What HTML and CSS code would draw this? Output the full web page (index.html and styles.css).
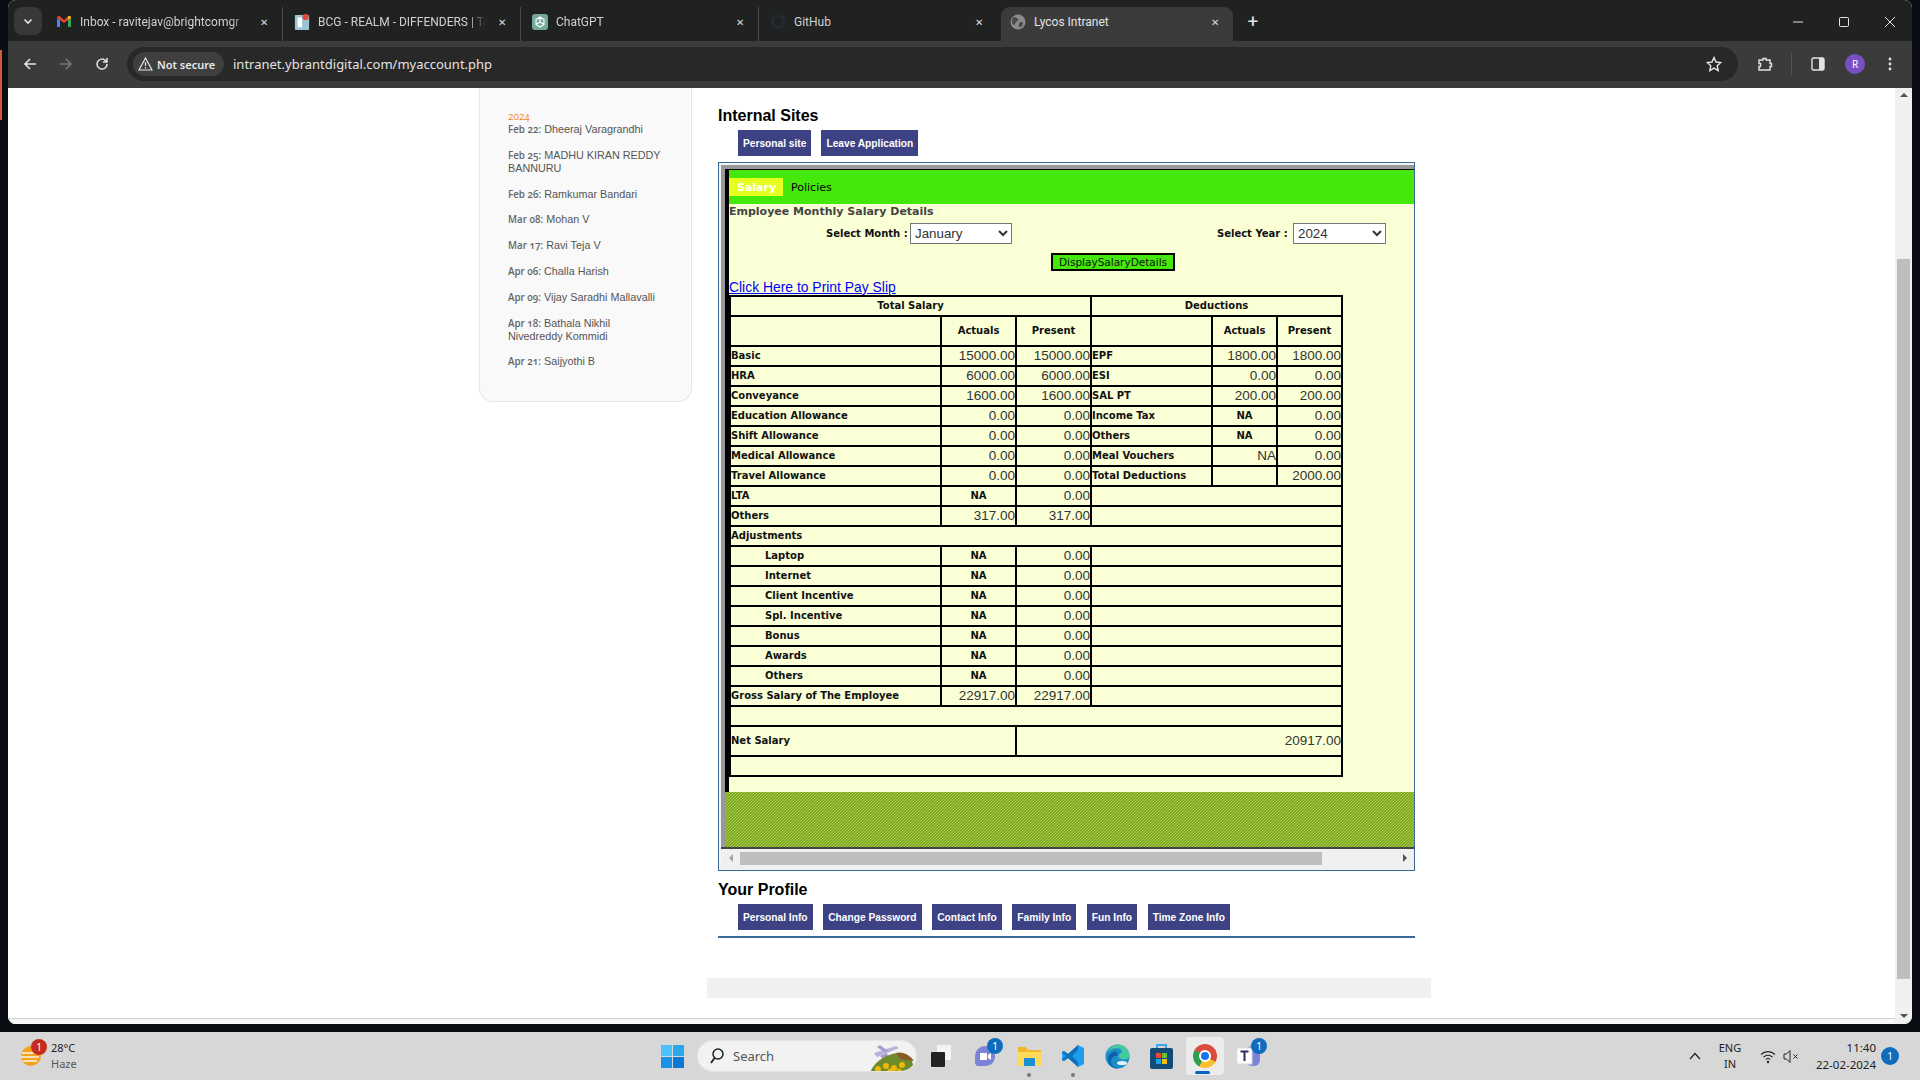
FILE: index.html
```html
<!DOCTYPE html>
<html lang="en">
<head>
    <meta charset="UTF-8">
    <title>Lycos Intranet</title>
    <link rel="stylesheet" href="styles.css">
</head>
<body>
    <div class="edge-strip"></div>

    <div class="window">
        <!-- Browser tabs -->
        <div class="tabstrip">
            <div class="tab-menu">
                <svg width="12" height="12" viewBox="0 0 12 12"><path d="M2.5 4.5 6 8l3.5-3.5" fill="none" stroke="#e3e3e3" stroke-width="1.6"/></svg>
            </div>
            <div class="tab">
                <svg class="favicon" viewBox="0 0 16 16"><path d="M1 13V4l3 2v7z" fill="#4285f4"/><path d="M15 13V4l-3 2v7z" fill="#34a853"/><path d="M1 4c0-2 2-2.500 3-1.500L8 6l4-3.500c1-1 3-.5 3 1.500l-3 2-4 3-4-3z" fill="#ea4335"/><path d="M12 2.500c1-1 3-.5 3 1.500l-3 2z" fill="#fbbc04"/></svg>
                <span class="tab-title">Inbox - ravitejav@brightcomgr</span>
                <span class="tab-close">&#10005;</span>
            </div>
            <div class="tab">
                <svg class="favicon" viewBox="0 0 16 18"><rect y="1" width="16" height="17" rx="1" fill="#9cc6d6"/><rect x="3" y="4" width="5" height="11" fill="#fff"/><circle cx="12" cy="3.500" r="3.500" fill="#e2453c"/></svg>
                <span class="tab-title">BCG - REALM - DIFFENDERS | Tr</span>
                <span class="tab-close">&#10005;</span>
            </div>
            <div class="tab">
                <svg class="favicon" viewBox="0 0 16 16"><rect width="16" height="16" rx="3" fill="#74aa9c"/><path d="M8 3 12 5.500v5L8 13 4 10.500v-5zM8 3v5l4 2.500M8 8l-4 2.500" fill="none" stroke="#fff" stroke-width="1.100"/></svg>
                <span class="tab-title">ChatGPT</span>
                <span class="tab-close">&#10005;</span>
            </div>
            <div class="tab tab-before-active">
                <svg class="favicon" viewBox="0 0 16 16"><circle cx="8" cy="8" r="7.500" fill="#24292e"/><circle cx="8" cy="7" r="4" fill="#1f2120"/></svg>
                <span class="tab-title">GitHub</span>
                <span class="tab-close">&#10005;</span>
            </div>
            <div class="tab tab-active">
                <svg class="favicon" viewBox="0 0 16 16"><circle cx="8" cy="8" r="7.500" fill="#8b8b8b"/><path d="M4 3c2 0 3 1 4 2s-1 2-2 3-1 3-2 3-2-2-2-4 1-4 2-4zM11 8c1 0 2 0 2 1s-1 4-3 4-1-2-1-3 1-2 2-2z" fill="#4a4a4a"/></svg>
                <span class="tab-title">Lycos Intranet</span>
                <span class="tab-close">&#10005;</span>
            </div>
            <div class="tab-new">+</div>
            <div class="win-controls">
                <svg width="12" height="12" viewBox="0 0 12 12"><path d="M1 6h10" stroke="#e3e3e3"/></svg>
                <svg width="12" height="12" viewBox="0 0 12 12"><rect x="1.500" y="1.500" width="9" height="9" rx="1" fill="none" stroke="#e3e3e3"/></svg>
                <svg width="12" height="12" viewBox="0 0 12 12"><path d="m1 1 10 10M11 1 1 11" stroke="#e3e3e3"/></svg>
            </div>
        </div>

        <!-- Address bar -->
        <div class="toolbar">
            <svg class="tool-icon" viewBox="0 0 16 16"><path d="M14 8H3M8 3 3 8l5 5" fill="none" stroke="#e3e3e3" stroke-width="1.600"/></svg>
            <svg class="tool-icon" viewBox="0 0 16 16"><path d="M2 8h11M8 3l5 5-5 5" fill="none" stroke="#777" stroke-width="1.600"/></svg>
            <svg class="tool-icon" viewBox="0 0 16 16"><path d="M13 8a5 5 0 1 1-1.500-3.500L13 6M13 2v4H9" fill="none" stroke="#e3e3e3" stroke-width="1.500"/></svg>
            <div class="omnibox">
                <div class="not-secure">
                    <svg width="15" height="14" viewBox="0 0 15 14"><path d="M7.500 1 14 13H1zM7.500 5v4M7.500 10v1.500" fill="none" stroke="#e3e3e3" stroke-width="1.200"/></svg>
                    <span>Not secure</span>
                </div>
                <span class="url">intranet.ybrantdigital.com/myaccount.php</span>
                <svg class="star" width="16" height="16" viewBox="0 0 16 16"><path d="m8 1.500 2 4.500 4.800.5-3.600 3.200 1 4.800L8 12.100 3.800 14.500l1-4.800L1.200 6.500 6 6z" fill="none" stroke="#e3e3e3" stroke-width="1.400"/></svg>
            </div>
            <svg class="tool-icon ext-icon" viewBox="0 0 16 16"><path d="M2 4h4V2.500h3V4h4v3.500h1.500v3H13V14H2v-3.500h1.500v-3H2z" fill="none" stroke="#e3e3e3" stroke-width="1.400"/></svg>
            <div class="tool-sep"></div>
            <svg class="tool-icon panel-icon" viewBox="0 0 16 16"><rect x="2" y="2" width="12" height="12" rx="1.500" fill="none" stroke="#e3e3e3" stroke-width="1.400"/><rect x="9" y="2" width="5" height="12" fill="#e3e3e3"/></svg>
            <div class="avatar">R</div>
            <svg class="tool-icon dots-icon" viewBox="0 0 16 16"><circle cx="8" cy="3" r="1.400" fill="#e3e3e3"/><circle cx="8" cy="8" r="1.400" fill="#e3e3e3"/><circle cx="8" cy="13" r="1.400" fill="#e3e3e3"/></svg>
        </div>

        <div class="viewport">
            <div class="page">
                <div class="page-row">
                    <!-- Birthday list -->
                    <aside class="sidebar">
                        <div class="year">2024</div>
                        <p class="bday"><span class="bday-date">Feb 22:</span> Dheeraj Varagrandhi</p>
                        <p class="bday"><span class="bday-date">Feb 25:</span> MADHU KIRAN REDDY BANNURU</p>
                        <p class="bday"><span class="bday-date">Feb 26:</span> Ramkumar Bandari</p>
                        <p class="bday"><span class="bday-date">Mar 08:</span> Mohan V</p>
                        <p class="bday"><span class="bday-date">Mar 17:</span> Ravi Teja V</p>
                        <p class="bday"><span class="bday-date">Apr 06:</span> Challa Harish</p>
                        <p class="bday"><span class="bday-date">Apr 09:</span> Vijay Saradhi Mallavalli</p>
                        <p class="bday"><span class="bday-date">Apr 18:</span> Bathala Nikhil Nivedreddy Kommidi</p>
                        <p class="bday"><span class="bday-date">Apr 21:</span> Saijyothi B</p>
                    </aside>

                    <main class="main">
                        <h2 class="section-title first">Internal Sites</h2>
                        <div class="btn-row">
                            <a class="blue-btn" href="#">Personal site</a>
                            <a class="blue-btn" href="#">Leave Application</a>
                        </div>

                        <!-- Salary frame -->
                        <div class="frame">
                            <div class="frame-pane">
                                <div class="salary-body">
                                    <div class="green-tabs">
                                        <span class="green-tab current">Salary</span>
                                        <span class="green-tab">Policies</span>
                                    </div>
                                    <div class="salary-title">Employee Monthly Salary Details</div>
                                    <div class="select-row">
                                        <label class="select-label">Select Month :</label>
                                        <select class="month-select"><option>January</option></select>
                                        <label class="select-label year-label">Select Year :</label>
                                        <select class="year-select"><option>2024</option></select>
                                    </div>
                                    <button class="display-btn" type="button">DisplaySalaryDetails</button>
                                    <a class="print-link" href="#">Click Here to Print Pay Slip</a>

                                    <table class="salary-table">
                                        <colgroup>
                                            <col class="c-label"><col class="c-num"><col class="c-num">
                                            <col class="c-ded"><col class="c-act"><col class="c-pre">
                                        </colgroup>
                                        <tr><th colspan="3">Total Salary</th><th colspan="3">Deductions</th></tr>
                                        <tr class="tall"><th></th><th>Actuals</th><th>Present</th><th></th><th>Actuals</th><th>Present</th></tr>
                                        <tr><td class="lb">Basic</td><td>15000.00</td><td>15000.00</td><td class="lb">EPF</td><td>1800.00</td><td>1800.00</td></tr>
                                        <tr><td class="lb">HRA</td><td>6000.00</td><td>6000.00</td><td class="lb">ESI</td><td>0.00</td><td>0.00</td></tr>
                                        <tr><td class="lb">Conveyance</td><td>1600.00</td><td>1600.00</td><td class="lb">SAL PT</td><td>200.00</td><td>200.00</td></tr>
                                        <tr><td class="lb">Education Allowance</td><td>0.00</td><td>0.00</td><td class="lb">Income Tax</td><td class="na">NA</td><td>0.00</td></tr>
                                        <tr><td class="lb">Shift Allowance</td><td>0.00</td><td>0.00</td><td class="lb">Others</td><td class="na">NA</td><td>0.00</td></tr>
                                        <tr><td class="lb">Medical Allowance</td><td>0.00</td><td>0.00</td><td class="lb">Meal Vouchers</td><td>NA</td><td>0.00</td></tr>
                                        <tr><td class="lb">Travel Allowance</td><td>0.00</td><td>0.00</td><td class="lb">Total Deductions</td><td></td><td>2000.00</td></tr>
                                        <tr><td class="lb">LTA</td><td class="na">NA</td><td>0.00</td><td colspan="3"></td></tr>
                                        <tr><td class="lb">Others</td><td>317.00</td><td>317.00</td><td colspan="3"></td></tr>
                                        <tr><td class="lb" colspan="6">Adjustments</td></tr>
                                        <tr><td class="lb sub">Laptop</td><td class="na">NA</td><td>0.00</td><td colspan="3"></td></tr>
                                        <tr><td class="lb sub">Internet</td><td class="na">NA</td><td>0.00</td><td colspan="3"></td></tr>
                                        <tr><td class="lb sub">Client Incentive</td><td class="na">NA</td><td>0.00</td><td colspan="3"></td></tr>
                                        <tr><td class="lb sub">Spl. Incentive</td><td class="na">NA</td><td>0.00</td><td colspan="3"></td></tr>
                                        <tr><td class="lb sub">Bonus</td><td class="na">NA</td><td>0.00</td><td colspan="3"></td></tr>
                                        <tr><td class="lb sub">Awards</td><td class="na">NA</td><td>0.00</td><td colspan="3"></td></tr>
                                        <tr><td class="lb sub">Others</td><td class="na">NA</td><td>0.00</td><td colspan="3"></td></tr>
                                        <tr><td class="lb">Gross Salary of The Employee</td><td>22917.00</td><td>22917.00</td><td colspan="3"></td></tr>
                                        <tr><td colspan="6"></td></tr>
                                        <tr class="tall"><td class="lb" colspan="2">Net Salary</td><td colspan="4">20917.00</td></tr>
                                        <tr><td colspan="6"></td></tr>
                                    </table>
                                </div>
                                <svg class="hatch" width="100%" height="55">
                                    <defs>
                                        <pattern id="hatch-tile" width="3" height="3" patternUnits="userSpaceOnUse">
                                            <rect width="3" height="3" fill="#7fa81a"/>
                                            <rect x="2" y="0" width="1" height="1" fill="#a9cc5c"/>
                                            <rect x="1" y="1" width="1" height="1" fill="#a9cc5c"/>
                                            <rect x="0" y="2" width="1" height="1" fill="#a9cc5c"/>
                                        </pattern>
                                    </defs>
                                    <rect width="100%" height="55" fill="url(#hatch-tile)"/>
                                </svg>
                            </div>
                            <div class="frame-hscroll">
                                <span class="arrow-left"></span>
                                <div class="hscroll-thumb"></div>
                                <span class="arrow-right"></span>
                            </div>
                        </div>

                        <h2 class="section-title">Your Profile</h2>
                        <div class="btn-row profile-btns">
                            <a class="blue-btn" href="#">Personal Info</a>
                            <a class="blue-btn" href="#">Change Password</a>
                            <a class="blue-btn" href="#">Contact Info</a>
                            <a class="blue-btn" href="#">Family Info</a>
                            <a class="blue-btn" href="#">Fun Info</a>
                            <a class="blue-btn" href="#">Time Zone Info</a>
                        </div>
                        <div class="profile-line"></div>
                    </main>
                </div>
                <div class="page-footer"></div>
                <div class="page-edge"></div>
            </div>

            <div class="page-scroll">
                <span class="arrow-up"></span>
                <div class="page-thumb"></div>
                <span class="arrow-down"></span>
            </div>
        </div>
    </div>

    <!-- Windows taskbar -->
    <div class="taskbar">
        <div class="weather">
            <svg class="weather-icon" width="22" height="22" viewBox="0 0 22 22"><circle cx="11" cy="11" r="10" fill="#f6a11b"/><path d="M2 8h16M1 12h18M3 16h14" stroke="#f4e2b8" stroke-width="2"/></svg>
            <span class="red-badge">1</span>
            <div class="weather-text"><span>28°C</span><span class="haze">Haze</span></div>
        </div>

        <div class="start-icon">
            <svg width="23" height="23" viewBox="0 0 23 23"><rect width="11" height="11" fill="#4cc2ff"/><rect x="12" width="11" height="11" fill="#2ba7ee"/><rect y="12" width="11" height="11" fill="#1a92e4"/><rect x="12" y="12" width="11" height="11" fill="#0a78d4"/></svg>
        </div>
        <div class="search-box">
            <svg width="16" height="18" viewBox="0 0 16 18"><circle cx="9" cy="7" r="5" fill="none" stroke="#222" stroke-width="1.500"/><path d="M5.500 11 2 16" stroke="#222" stroke-width="1.800"/></svg>
            <span class="search-text">Search</span>
            <svg class="search-art" width="50" height="32" viewBox="0 0 50 32"><path d="M8 12 30 5l3 2-22 9z" fill="#b9b3dc"/><path d="M14 4l8 6-4 1-7-5zM14 15l7-3 1 3-5 3z" fill="#a49dcf"/><path d="M4 32c4-12 18-20 30-20s12 10 14 14l-2 6z" fill="#6d8a2c"/><path d="M30 12c6-2 14 2 18 8l-14-2z" fill="#8a5a24"/><circle cx="12" cy="28" r="3" fill="#f2b705"/><circle cx="20" cy="25" r="3" fill="#f2b705"/><circle cx="28" cy="27" r="3" fill="#f2b705"/><circle cx="36" cy="24" r="3" fill="#f2b705"/><circle cx="24" cy="30" r="2.500" fill="#f2b705"/><circle cx="33" cy="30" r="2.500" fill="#f2b705"/></svg>
        </div>
        <div class="task-slot">
            <svg width="20" height="22" viewBox="0 0 20 22"><rect x="6" y="0" width="14" height="15" rx="1" fill="#f4f4f4"/><rect y="7" width="14" height="15" rx="1" fill="#222"/></svg>
        </div>
        <div class="task-slot">
            <svg width="24" height="24" viewBox="0 0 24 24"><path d="M12 2a10 10 0 0 1 10 10c0 6-4 10-10 10H5c-2 0-3-2-3-4v-6A10 10 0 0 1 12 2z" fill="#7b83d8"/><path d="M7 9h7v7H7zM15 11l3-2v7l-3-2z" fill="#fff"/></svg>
            <span class="blue-badge">1</span>
        </div>
        <div class="task-slot">
            <svg width="25" height="22" viewBox="0 0 25 22"><path d="M1 2h8l2 3h13v16H1z" fill="#f0b72f"/><path d="M1 7h23v14H1z" fill="#ffd95a"/><rect x="7" y="13" width="11" height="8" fill="#1a8fd8"/></svg>
            <span class="app-dot"></span>
        </div>
        <div class="task-slot">
            <svg width="24" height="24" viewBox="0 0 24 24"><path d="M17 1l6 3v16l-6 3-10-9-4 3-2-1V8l2-1 4 3z" fill="#1f9cf0"/><path d="M17 1 7 10l-4-3-2 1 4 4-4 4 2 1 4-3 10 9 0-5-6-6 6-6z" fill="#0f6fb8"/></svg>
            <span class="app-dot"></span>
        </div>
        <div class="task-slot">
            <svg width="25" height="25" viewBox="0 0 25 25"><circle cx="12.500" cy="12.500" r="12" fill="#1b8ec9"/><path d="M2 9C4 3 9 .5 13 .5c6 0 11 5 11.500 11 0 3-3 4-6 4-3 0-5-1-5-3 0-3 4-3 3-6C15 3 6 3 2 9z" fill="#46c8a0"/><path d="M13 12c-4-1-7 2-7 6s4 6.500 8 6.500c-5 1-11-3-11-10 0-2 3-7 8-7z" fill="#0c5ea6"/><ellipse cx="17" cy="19" rx="5" ry="2" fill="#e6f3f8"/></svg>
        </div>
        <div class="task-slot">
            <svg width="23" height="26" viewBox="0 0 23 26"><path d="M7 5V2h9v3" fill="none" stroke="#3fa5e8" stroke-width="2"/><rect y="5" width="23" height="21" rx="2" fill="#124a78"/><rect x="6" y="10" width="5" height="5" fill="#e8492e"/><rect x="12" y="10" width="5" height="5" fill="#6dbb2e"/><rect x="6" y="16" width="5" height="5" fill="#1ea3ea"/><rect x="12" y="16" width="5" height="5" fill="#fbbc09"/></svg>
        </div>
        <div class="task-slot active-slot">
            <div class="chrome-logo"><div class="chrome-eye"></div></div>
            <span class="active-bar"></span>
        </div>
        <div class="task-slot">
            <svg width="26" height="26" viewBox="0 0 26 26"><rect x="10" y="3" width="14" height="20" rx="6" fill="#7b83d8"/><rect x="1" y="5" width="15" height="16" fill="#fff" stroke="#ddd"/><path d="M4.500 8.500h8M8.500 8.500V18" stroke="#2b2b6b" stroke-width="2"/></svg>
            <span class="blue-badge">1</span>
        </div>

        <div class="tray">
            <svg class="tray-up" width="12" height="8" viewBox="0 0 12 8"><path d="m1 7 5-5.500L11 7" fill="none" stroke="#222" stroke-width="1.200"/></svg>
            <div class="lang"><span>ENG</span><span>IN</span></div>
            <svg width="16" height="15" viewBox="0 0 16 15"><path d="M1 5.500a10 10 0 0 1 14 0M3.500 8a6.500 6.500 0 0 1 9 0M5.800 10.500a3 3 0 0 1 4.400 0" fill="none" stroke="#222" stroke-width="1.100"/><circle cx="8" cy="13" r="1.200" fill="#222"/></svg>
            <svg class="speaker" width="17" height="15" viewBox="0 0 17 15"><path d="M1 5h2.500L7 1.500v12L3.500 10H1zM10.500 5.500l4 4M14.500 5.500l-4 4" fill="none" stroke="#222" stroke-width="1"/></svg>
            <div class="clock"><span>11:40</span><span>22-02-2024</span></div>
            <span class="notif-badge">1</span>
        </div>
    </div>
</body>
</html>
```

FILE: styles.css
```css
* {
    box-sizing: border-box;
}

body {
    margin: 0;
    width: 1920px;
    height: 1080px;
    overflow: hidden;
    background-color: #0a0d12;
    font-family: "Liberation Sans", Arial, sans-serif;
}

.edge-strip {
    position: absolute;
    left: 0;
    top: 50px;
    width: 2px;
    height: 70px;
    background-color: #d2593a;
}

.window {
    margin: 0 8px;
    height: 1024px;
    border-radius: 8px;
    overflow: hidden;
    display: flex;
    flex-direction: column;
    background-color: #fff;
}

/* Tabs */
.tabstrip {
    height: 41px;
    flex: none;
    display: flex;
    align-items: flex-end;
    background-color: #202221;
    font-family: Roboto, sans-serif;
    font-size: 12px;
    color: #d0d0d0;
}

.tab-menu {
    width: 28px;
    height: 28px;
    margin: 0 3px 6px 6px;
    border-radius: 8px;
    background-color: #383838;
    display: flex;
    align-items: center;
    justify-content: center;
}

.tab {
    position: relative;
    width: 238px;
    height: 34px;
    flex: none;
    display: flex;
    align-items: center;
    padding: 0 12px 4px 11px;
    border-right: 1px solid #4b4b4b;
    background-clip: padding-box;
}

.tab-before-active {
    border-right: 0;
}

.tab-active {
    background-color: #3b3b3b;
    border-right: 0;
    border-radius: 9px 9px 0 0;
    width: 232px;
    margin-left: 4px;
    padding-left: 9px;
    color: #e3e3e3;
}

.favicon {
    width: 16px;
    height: 16px;
    flex: none;
    margin-right: 8px;
}

.tab-title {
    flex: 1;
    white-space: nowrap;
    overflow: hidden;
    -webkit-mask-image: linear-gradient(to right, #000 90%, transparent);
    mask-image: linear-gradient(to right, #000 90%, transparent);
}

.tab-active .tab-title,
.tab-before-active .tab-title {
    -webkit-mask-image: none;
    mask-image: none;
}

.tab-close {
    flex: none;
    width: 12px;
    margin-left: 10px;
    font-size: 10px;
    text-align: center;
    color: #dcdcdc;
}

.tab-new {
    width: 40px;
    height: 34px;
    text-align: center;
    font-size: 19px;
    line-height: 30px;
    color: #e3e3e3;
}

.win-controls {
    margin-left: auto;
    display: flex;
    gap: 34px;
    padding: 0 16px 13px 0;
}

/* Toolbar */
.toolbar {
    height: 47px;
    flex: none;
    display: flex;
    align-items: center;
    padding: 0 0 1px 14px;
    background-color: #3b3b3b;
}

.tool-icon {
    width: 16px;
    height: 16px;
    flex: none;
    margin-right: 20px;
}

.omnibox {
    width: 1611px;
    height: 34px;
    margin-left: -3px;
    flex: none;
    border-radius: 17px;
    background-color: #282828;
    display: flex;
    align-items: center;
    padding: 0 16px 0 6px;
}

.not-secure {
    height: 24px;
    width: 91px;
    border-radius: 12px;
    background-color: #3f3f3f;
    display: flex;
    align-items: center;
    gap: 4px;
    padding-left: 5px;
    font-family: "Noto Sans", sans-serif;
    font-size: 11px;
    font-weight: 600;
    color: #e8e8e8;
}

.url {
    margin-left: 9px;
    font-family: "Noto Sans", sans-serif;
    font-size: 13px;
    color: #e3e3e3;
}

.star {
    margin-left: auto;
}

.ext-icon {
    margin: 0 0 0 19px;
}

.tool-sep {
    width: 1px;
    height: 22px;
    margin: 0 18px;
    background-color: #555;
}

.panel-icon {
    margin-right: 19px;
}

.avatar {
    width: 20px;
    height: 20px;
    border-radius: 50%;
    background-color: #7b4fc4;
    color: #fff;
    font-family: "Noto Sans", sans-serif;
    font-size: 10px;
    text-align: center;
    line-height: 20px;
}

.dots-icon {
    margin: 0 0 0 17px;
}

/* Page */
.viewport {
    flex: 1;
    display: flex;
    min-height: 0;
}

.page {
    flex: 1;
    min-width: 0;
    display: flex;
    flex-direction: column;
    background-color: #fff;
}

.page-row {
    display: flex;
    align-items: flex-start;
}

.sidebar {
    width: 213px;
    height: 314px;
    margin-left: 471px;
    padding: 22px 0 0 28px;
    background-color: #f9f9f9;
    border: 1px solid #e6e6e6;
    border-top: 0;
    border-radius: 0 0 14px 14px;
    font-size: 10.8px;
    line-height: 13px;
    color: #555;
}

.year {
    height: 13px;
    font-family: "Open Sans", sans-serif;
    font-feature-settings: "onum";
    font-size: 10px;
    color: #f5872b;
}

.bday {
    width: 156px;
    margin: 0 0 12.8px;
}

.bday-date {
    font-family: "Open Sans", sans-serif;
    font-feature-settings: "onum";
    font-size: 9.8px;
    font-weight: 600;
    color: #666;
}

.main {
    width: 697px;
    margin-left: 26px;
}

.section-title {
    margin: 10px 0 5px;
    font-size: 16px;
    line-height: 18px;
    color: #000;
}

.section-title.first {
    margin-top: 19px;
}

.btn-row {
    display: flex;
    gap: 10px;
    padding-left: 20px;
}

.profile-btns {
    gap: 10.7px;
}

.blue-btn {
    height: 26px;
    padding: 1px 5px 0;
    background-color: #3d4285;
    color: #fff;
    font-size: 10.2px;
    font-weight: bold;
    line-height: 25px;
    text-decoration: none;
}

/* Salary frame */
.frame {
    height: 709px;
    margin-top: 6px;
    padding: 2px 0 0 2px;
    border: 1px solid #3a6a95;
    background-color: #f4f4f4;
}

.frame-pane {
    border-top: 4px solid #999;
    border-left: 4px solid #999;
}

.salary-body {
    height: 623px;
    border-top: 1px solid #000;
    border-left: 4px solid #000;
    background-color: #faffd6;
    font-family: "DejaVu Sans", sans-serif;
}

.green-tabs {
    height: 34px;
    padding-top: 8px;
    display: flex;
    background-color: #44e80a;
}

.green-tab {
    height: 18px;
    padding: 1px 8px 0;
    font-size: 11px;
    line-height: 17px;
    color: #000;
}

.green-tab.current {
    width: 54px;
    background-color: #e6ff20;
    color: #fff;
    font-weight: bold;
}

.salary-title {
    height: 14px;
    padding-top: 1px;
    font-size: 11px;
    font-weight: bold;
    line-height: 14px;
    color: #444;
}

.select-row {
    height: 21px;
    margin-top: 5px;
    padding-left: 97px;
    display: flex;
    align-items: center;
}

.select-label {
    width: 81px;
    font-size: 10px;
    font-weight: bold;
    color: #111;
    white-space: nowrap;
}

.year-label {
    width: 73px;
    margin-left: 205px;
}

.month-select,
.year-select {
    height: 21px;
    margin-left: 3px;
    padding-left: 0;
    border: 1px solid #767676;
    border-radius: 0;
    background-color: #fff;
    font-family: "Liberation Sans", sans-serif;
    font-size: 13.33px;
    color: #333;
}

.month-select {
    width: 102px;
}

.year-select {
    width: 93px;
}

.display-btn {
    display: block;
    width: 124px;
    height: 18px;
    margin: 9px 0 0 322px;
    padding: 0;
    border: 2px solid #000;
    background-color: #44e80a;
    font-family: "DejaVu Sans", sans-serif;
    font-size: 10.5px;
    line-height: 14px;
    color: #111;
}

.print-link {
    display: block;
    height: 16px;
    margin-top: 8px;
    font-family: "Liberation Sans", sans-serif;
    font-size: 13.9px;
    line-height: 16px;
    color: #00f;
}

/* Salary table */
.salary-table {
    width: 614px;
    table-layout: fixed;
    border-collapse: collapse;
    font-size: 10px;
    color: #111;
}

.c-label { width: 211px; }
.c-num { width: 75px; }
.c-ded { width: 121px; }
.c-act { width: 65px; }
.c-pre { width: 65px; }

.salary-table tr {
    height: 20px;
}

.salary-table tr.tall {
    height: 30px;
}

.salary-table th,
.salary-table td {
    padding: 0;
    border: 2px solid #000;
    line-height: 14px;
    white-space: nowrap;
}

.salary-table th {
    font-weight: bold;
    text-align: center;
}

.salary-table td {
    font-family: "Liberation Sans", sans-serif;
    font-size: 13.5px;
    text-align: right;
    color: #333;
}

.salary-table td.lb,
.salary-table td.na {
    font-family: "DejaVu Sans", sans-serif;
    font-size: 10px;
    font-weight: bold;
    color: #111;
}

.salary-table td.lb {
    text-align: left;
}

.salary-table td.na {
    text-align: center;
}

.salary-table td.sub {
    padding-left: 34px;
}

.hatch {
    display: block;
}

.frame-hscroll {
    height: 23px;
    display: flex;
    align-items: center;
    position: relative;
    border-top: 2px solid #444;
    padding: 0 0 2px 19px;
    background-color: #f0f0f0;
}

.hscroll-thumb {
    width: 582px;
    height: 13px;
    background-color: #bebebe;
}

.arrow-left {
    position: absolute;
    left: 8px;
    top: 5px;
    border: 4px solid transparent;
    border-left: 0;
    border-right: 4px solid #a3a3a3;
}

.arrow-right {
    position: absolute;
    right: 7px;
    top: 5px;
    border: 4px solid transparent;
    border-right: 0;
    border-left: 4px solid #505050;
}

.profile-line {
    height: 2px;
    margin-top: 6px;
    background-color: #3a6a95;
}

.page-footer {
    width: 724px;
    height: 20px;
    margin: 40px 0 0 699px;
    background-color: #f0f0f0;
}

.page-edge {
    height: 6px;
    margin-top: auto;
    border-top: 1px solid #d0d0d0;
    background-color: #f7f7f7;
}

/* Page scrollbar */
.page-scroll {
    position: relative;
    width: 17px;
    flex: none;
    background-color: #f0f0f0;
}

.page-thumb {
    width: 13px;
    height: 720px;
    margin: 171px 0 0 2px;
    background-color: #bebebe;
}

.arrow-up,
.arrow-down {
    position: absolute;
    left: 5px;
    border: 4px solid transparent;
}

.arrow-up {
    top: 5px;
    border-top: 0;
    border-bottom: 4px solid #505050;
}

.arrow-down {
    bottom: 6px;
    border-bottom: 0;
    border-top: 4px solid #505050;
}

/* Taskbar */
.taskbar {
    height: 48px;
    margin-top: 8px;
    display: flex;
    align-items: center;
    background-color: #d7d7d7;
    font-family: "Noto Sans", sans-serif;
    font-size: 11px;
    color: #222;
}

.weather {
    position: relative;
    width: 650px;
    height: 48px;
    flex: none;
    display: flex;
    align-items: center;
    padding-left: 20px;
}

.weather-icon {
    flex: none;
}

.red-badge {
    position: absolute;
    left: 31px;
    top: 7px;
    width: 16px;
    height: 16px;
    border-radius: 50%;
    background-color: #c42b1c;
    color: #fff;
    font-size: 10px;
    text-align: center;
    line-height: 16px;
}

.weather-text {
    display: flex;
    flex-direction: column;
    margin-left: 9px;
    line-height: 16px;
}

.haze {
    color: #555;
}

.start-icon {
    width: 44px;
    display: flex;
    justify-content: center;
}

.search-box {
    width: 218px;
    height: 30px;
    margin: 0 0 0 4px;
    display: flex;
    align-items: center;
    padding-left: 11px;
    border-radius: 15px;
    background-color: #f2f2f2;
    overflow: hidden;
    box-shadow: 0 0 0 1px #e4e4e4;
}

.search-text {
    margin-left: 8px;
    font-size: 13px;
    color: #555;
}

.search-art {
    margin-left: auto;
    margin-top: 2px;
}

.task-slot {
    position: relative;
    width: 44px;
    height: 38px;
    flex: none;
    display: flex;
    align-items: center;
    justify-content: center;
}

.search-box + .task-slot {
    margin-left: 3px;
}

.active-slot::before {
    content: '';
    position: absolute;
    left: 3px;
    right: 3px;
    top: 0;
    bottom: 0;
    border-radius: 4px;
    background-color: #ececec;
}

.chrome-logo {
    position: relative;
    width: 24px;
    height: 24px;
    border-radius: 50%;
    background: conic-gradient(#dd4b3e 0 120deg, #fbc02d 120deg 210deg, #2e9e4f 210deg 300deg, #dd4b3e 300deg);
    display: flex;
    align-items: center;
    justify-content: center;
}

.chrome-eye {
    width: 12px;
    height: 12px;
    border-radius: 50%;
    border: 2px solid #fff;
    background-color: #1a73e8;
}

.active-bar {
    position: absolute;
    left: 12px;
    bottom: 1px;
    width: 15px;
    height: 3px;
    border-radius: 2px;
    background-color: #0067c0;
}

.app-dot {
    position: absolute;
    left: 20px;
    bottom: -2px;
    width: 4px;
    height: 4px;
    border-radius: 50%;
    background-color: #777;
}

.blue-badge {
    position: absolute;
    left: 24px;
    top: 1px;
    width: 16px;
    height: 16px;
    border-radius: 50%;
    background-color: #0f6cbd;
    color: #fff;
    font-size: 10px;
    text-align: center;
    line-height: 16px;
}

.tray {
    margin-left: auto;
    display: flex;
    align-items: center;
    padding-right: 21px;
}

.tray-up {
    margin-right: 16px;
}

.lang {
    display: flex;
    flex-direction: column;
    width: 26px;
    margin-right: 17px;
    text-align: center;
    line-height: 16px;
}

.speaker {
    margin-left: 7px;
}

.clock {
    display: flex;
    flex-direction: column;
    align-items: flex-end;
    margin-left: 16px;
    font-size: 11.5px;
    line-height: 17px;
}

.notif-badge {
    width: 18px;
    height: 18px;
    margin-left: 5px;
    border-radius: 50%;
    background-color: #0f6cbd;
    color: #fff;
    font-size: 10px;
    text-align: center;
    line-height: 18px;
}
```
